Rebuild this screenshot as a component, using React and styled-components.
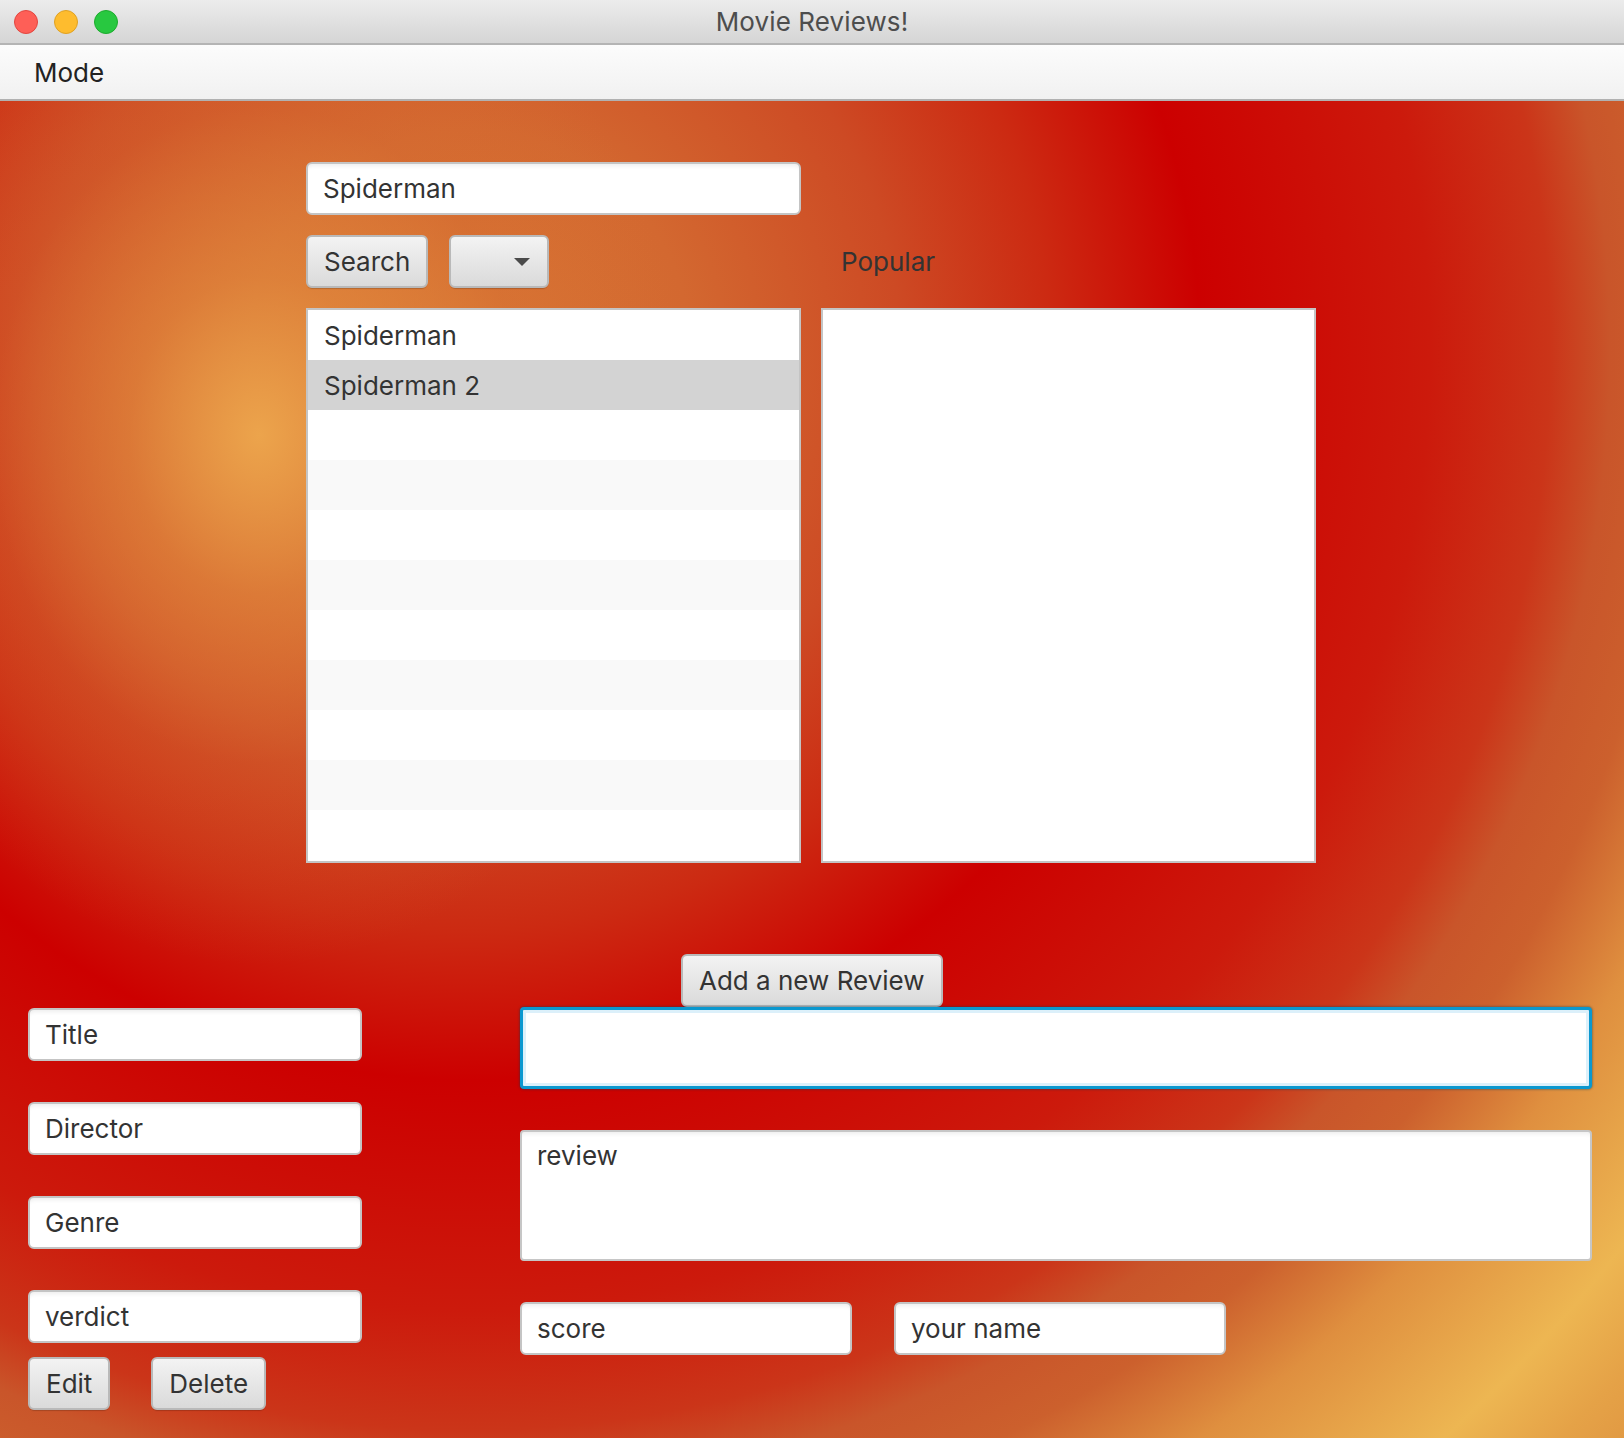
import styled, { createGlobalStyle } from 'styled-components';

const GlobalStyle = createGlobalStyle`
  html, body {
    margin: 0;
    padding: 0;
    background: #ffffff;
  }
  body {
    font-family: Inter, "Helvetica Neue", "Liberation Sans", sans-serif;
    color: #333333;
  }
  * {
    box-sizing: border-box;
  }
`;

const Window = styled.div`
  width: 1624px;
  height: 1438px;
  display: flex;
  flex-direction: column;
  overflow: hidden;
`;

const TitleBar = styled.div`
  flex: none;
  height: 45px;
  display: grid;
  grid-template-columns: 1fr auto 1fr;
  align-items: center;
  padding: 0 14px;
  background: linear-gradient(#ececec, #d5d5d5);
  border-bottom: 2px solid #b4b4b4;
`;

const Lights = styled.div`
  display: flex;
  gap: 16px;
`;

const Light = styled.span`
  width: 24px;
  height: 24px;
  border-radius: 50%;
  background: ${(p) => p.$fill};
  border: 1px solid ${(p) => p.$edge};
`;

const WindowTitle = styled.div`
  font-size: 26px;
  color: #4d4d4d;
  letter-spacing: 0.1px;
`;

const MenuBar = styled.div`
  flex: none;
  height: 56px;
  display: flex;
  align-items: center;
  padding-left: 34px;
  background: linear-gradient(#fcfcfc, #f1f1f1);
  border-bottom: 2px solid #b1b1b1;
`;

const MenuItem = styled.span`
  font-size: 26px;
  color: #222222;
`;

const Content = styled.div`
  flex: 1;
  padding-top: 61px;
  background:
    radial-gradient(
      ellipse 430px 530px at 259px 334px,
      rgba(236, 164, 76, 1) 0%,
      rgba(228, 144, 64, 0.6) 30%,
      rgba(216, 112, 50, 0.28) 62%,
      rgba(210, 100, 45, 0) 100%
    ),
    radial-gradient(
      circle at 470px 249px,
      #d87634 0px,
      #d36830 220px,
      #cd4a24 430px,
      #cc2a12 580px,
      #cc0000 730px,
      #cc1a0c 960px,
      #cb3519 1080px,
      #c9552a 1140px,
      #cc602d 1210px,
      #df8f3f 1310px,
      #edb652 1460px,
      #e5a247 1540px,
      #dc8f3e 1650px
    );
`;

const TopGrid = styled.div`
  margin-left: 306px;
  display: grid;
  grid-template-columns: 495px 495px;
  column-gap: 20px;
`;

const TextField = styled.input`
  display: block;
  width: ${(p) => p.$width || '100%'};
  height: ${(p) => p.$height || '53px'};
  padding: 0 15px;
  font-family: Inter, "Helvetica Neue", "Liberation Sans", sans-serif;
  font-size: 26px;
  color: #333333;
  background: #ffffff;
  border: 2px solid #c4c4c4;
  border-radius: 6px;
  box-shadow: inset 0 5px 4px -3px rgba(0, 0, 0, 0.07);
  outline: none;
`;

const FocusedField = styled(TextField)`
  border: 3px solid #0b98cf;
  border-radius: 4px;
  box-shadow:
    inset 0 0 0 3px #dcf0fa,
    0 0 2px 1px rgba(0, 60, 90, 0.35);
`;

const ReviewArea = styled.textarea`
  display: block;
  width: 100%;
  height: 131px;
  padding: 8px 15px;
  font-family: Inter, "Helvetica Neue", "Liberation Sans", sans-serif;
  font-size: 26px;
  line-height: 32px;
  color: #333333;
  background: #ffffff;
  border: 2px solid #c6c6c6;
  border-radius: 4px;
  box-shadow: inset 0 5px 4px -3px rgba(0, 0, 0, 0.07);
  resize: none;
  outline: none;
`;

const Controls = styled.div`
  grid-column: 1;
  margin-top: 20px;
  display: flex;
  gap: 21px;
`;

const Button = styled.button`
  height: 53px;
  padding: 0 16px;
  display: flex;
  align-items: center;
  justify-content: ${(p) => (p.$menu ? 'flex-end' : 'center')};
  width: ${(p) => p.$width || 'auto'};
  font-family: Inter, "Helvetica Neue", "Liberation Sans", sans-serif;
  font-size: 26px;
  color: #333333;
  background: linear-gradient(#f3f3f3, #dadada);
  border: 2px solid #b9b9b9;
  border-radius: 6px;
  box-shadow: 0 2px 1px -1px rgba(0, 0, 0, 0.18);
`;

const Caret = styled.span`
  width: 0;
  height: 0;
  margin-right: 1px;
  border-left: 8px solid transparent;
  border-right: 8px solid transparent;
  border-top: 8px solid #4a4a4a;
`;

const Label = styled.div`
  grid-column: 2;
  margin-top: 20px;
  display: flex;
  align-items: center;
  padding-left: 20px;
  font-size: 26px;
  color: #333333;
`;

const List = styled.div`
  margin-top: 20px;
  height: 555px;
  display: flex;
  flex-direction: column;
  background: #ffffff;
  border: 2px solid #c4c4c4;
  overflow: hidden;
`;

const Row = styled.div`
  flex: none;
  height: 50px;
  display: flex;
  align-items: center;
  padding-left: 16px;
  font-size: 26px;
  color: #333333;
  background: ${(p) => (p.$selected ? '#d3d3d3' : p.$odd ? '#f9f9f9' : '#ffffff')};
`;

const Bottom = styled.div`
  margin-top: 91px;
  display: flex;
  padding-left: 28px;
`;

const LeftColumn = styled.div`
  width: 334px;
  margin-top: 54px;
  display: flex;
  flex-direction: column;
`;

const FieldStack = styled.div`
  display: flex;
  flex-direction: column;
  gap: 41px;
`;

const ButtonRow = styled.div`
  margin-top: 14px;
  display: flex;
  gap: 41px;
`;

const RightColumn = styled.div`
  width: 1072px;
  margin-left: 158px;
  display: flex;
  flex-direction: column;
`;

const AddRow = styled.div`
  display: flex;
  padding-left: 161px;
`;

const Spacer = styled.div`
  height: 41px;
`;

const PairRow = styled.div`
  display: flex;
  gap: 42px;
`;

const results = ['Spiderman', 'Spiderman 2', '', '', '', '', '', '', '', '', ''];

export default function App() {
  return (
    <Window>
      <GlobalStyle />
      <TitleBar>
        <Lights>
          <Light $fill="#fe5f57" $edge="#e2463f" />
          <Light $fill="#febc2e" $edge="#dfa123" />
          <Light $fill="#28c840" $edge="#1dab2d" />
        </Lights>
        <WindowTitle>Movie Reviews!</WindowTitle>
        <span />
      </TitleBar>
      <MenuBar>
        <MenuItem>Mode</MenuItem>
      </MenuBar>
      <Content>
        <TopGrid>
          <TextField defaultValue="Spiderman" readOnly />
          <span />
          <Controls>
            <Button>Search</Button>
            <Button $menu $width="100px" aria-label="menu">
              <Caret />
            </Button>
          </Controls>
          <Label>Popular</Label>
          <List>
            {results.map((name, i) => (
              <Row key={i} $odd={i % 2 === 1} $selected={i === 1}>
                {name}
              </Row>
            ))}
          </List>
          <List />
        </TopGrid>
        <Bottom>
          <LeftColumn>
            <FieldStack>
              <TextField defaultValue="Title" readOnly />
              <TextField defaultValue="Director" readOnly />
              <TextField defaultValue="Genre" readOnly />
              <TextField defaultValue="verdict" readOnly />
            </FieldStack>
            <ButtonRow>
              <Button>Edit</Button>
              <Button>Delete</Button>
            </ButtonRow>
          </LeftColumn>
          <RightColumn>
            <AddRow>
              <Button>Add a new Review</Button>
            </AddRow>
            <FocusedField $height="82px" defaultValue="" readOnly />
            <Spacer />
            <ReviewArea defaultValue="review" readOnly />
            <Spacer />
            <PairRow>
              <TextField $width="332px" defaultValue="score" readOnly />
              <TextField $width="332px" defaultValue="your name" readOnly />
            </PairRow>
          </RightColumn>
        </Bottom>
      </Content>
    </Window>
  );
}
